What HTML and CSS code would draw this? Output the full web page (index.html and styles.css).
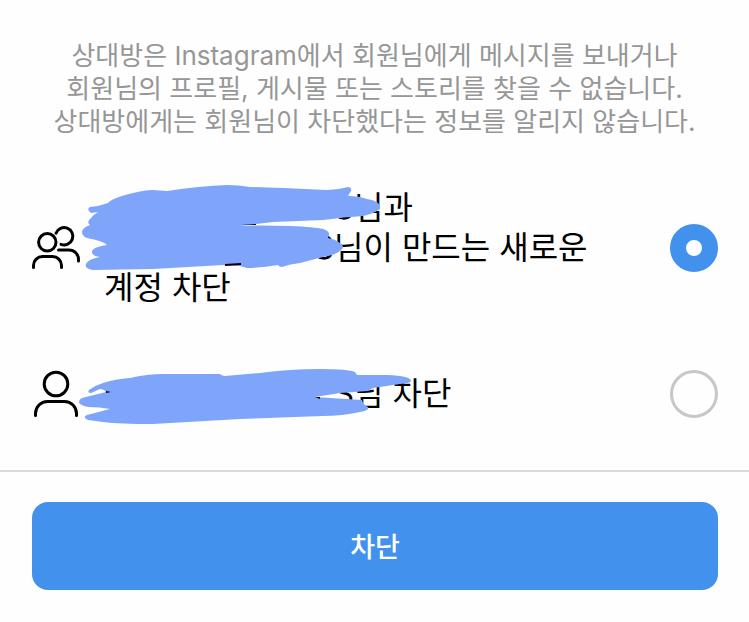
FILE: index.html
```html
<!DOCTYPE html>
<html lang="ko">
<head>
<meta charset="utf-8">
<meta name="viewport" content="width=device-width, initial-scale=1">
<title>차단</title>
<link rel="stylesheet" href="styles.css">
</head>
<body>
<form class="sheet">
  <p class="note">상대방은 Instagram에서 회원님에게 메시지를 보내거나<br>회원님의 프로필, 게시물 또는 스토리를 찾을 수 없습니다.<br>상대방에게는 회원님이 차단했다는 정보를 알리지 않습니다.</p>

  <div class="options">
    <label class="option">
      <svg class="icon" viewBox="0 0 48 48" aria-hidden="true">
        <circle cx="15.3" cy="18.3" r="8.7"/>
        <path d="M1.500 43.500v-2a9 9 0 0 1 9-9h10a9 9 0 0 1 9 9v2"/>
        <path d="M24 9.200A8.700 8.700 0 1 1 29 20.400"/>
        <path d="M26.500 26H37a9.500 9.500 0 0 1 9.500 9.500v1.500"/>
      </svg>
      <span class="text">
        <span class="line"><span class="name name-wide">S</span>님과</span>
        <span class="line"><span class="name">S</span>님이 만드는 새로운</span>
        <span class="line">계정 차단</span>
        <svg class="scribble scribble-tall" viewBox="80 180 310 96" aria-hidden="true">
          <path d="M90 207Q100 206 108 203Q112 198 133 193Q145 190 153 190L167 191Q200 186 227 185Q238 185 250 187L283 188L327 190Q338 190 348 187Q352 187 351 191L348 196Q359 196 367 199Q380 201 380 207Q380 212 363 216Q345 217 323 220L273 222L240 226Q257 225 290 226Q315 227 323 229Q330 231 329 235L328 238Q335 239 340 243Q346 247 340 251Q335 255 323 257L300 263Q290 264 282 267Q279 267 278 265Q262 268 247 268L240 266L223 265L153 269L93 270Q84 268 86 264Q88 259 100 257Q92 256 92 252Q92 247 107 245Q103 241 87 238Q82 236 82 232Q82 228 90 225Q86 222 91 218Q93 215 98 212L91 213Q86 209 90 207Z"/>
          <path class="ink" d="M241 225l15-1v1zM225 264l16-1v2l-16 1z"/>
        </svg>
      </span>
      <input class="radio" type="radio" name="scope" checked>
    </label>

    <label class="option">
      <svg class="icon" viewBox="0 0 48 48" aria-hidden="true">
        <circle cx="24" cy="14" r="11.8"/>
        <path d="M3.500 45.500v-2a12 12 0 0 1 12-12h17a12 12 0 0 1 12 12v2"/>
      </svg>
      <span class="text">
        <span class="line"><span class="name name-wide">S</span>님 차단</span>
        <svg class="scribble scribble-short" viewBox="76 364 340 64" aria-hidden="true">
          <path d="M89 390Q96 385 103 383Q115 379 130 378Q147 374 163 374H220Q222 376 225 376L260 373Q290 369 320 369Q348 369 355 372L357 375L387 375Q411 376 411 381Q411 383 400 384L373 388L368 391L340 393L315 397L362 400Q363 405 368 407Q370 410 360 412Q342 416 323 416L240 419L153 424Q120 424 103 422L88 420Q82 417 87 415L110 409Q100 407 88 407Q79 405 79 402Q79 398 86 397L106 392Q104 389 100 389L91 393Q87 393 89 390Z"/>
          <path class="ink" d="M106 391l5 1-5 1zM315 397l5 0v2z"/>
        </svg>
      </span>
      <input class="radio" type="radio" name="scope">
    </label>
  </div>

  <footer class="actions">
    <button class="submit" type="button">차단</button>
  </footer>
</form>
</body>
</html>
```
FILE: styles.css
```css
* {
  box-sizing: border-box;
}

body {
  margin: 0;
  background: #fefefe;
  color: #000;
  font-family: Inter, "Noto Sans CJK KR", sans-serif;
}

.note {
  margin: 0;
  padding: 39px 16px 0;
  color: #969696;
  font-size: 26px;
  line-height: 33px;
  text-align: center;
}

.options {
  display: flex;
  flex-direction: column;
  gap: 62px;
  padding: 50px 31px 52px 32px;
}

.option {
  display: flex;
  align-items: center;
  gap: 24px;
}

.icon {
  flex: none;
  width: 48px;
  height: 48px;
  fill: none;
  stroke: #000;
  stroke-width: 3;
  stroke-linecap: round;
}

.text {
  position: relative;
  flex: 1;
  font-size: 32px;
  line-height: 40px;
}

.line {
  display: block;
  white-space: nowrap;
}

.name {
  display: inline-block;
  width: 230px;
  text-align: right;
}

.name-wide {
  width: 250px;
}

.scribble {
  position: absolute;
  fill: #7fa5fa;
}

.scribble-tall {
  top: -8px;
  left: -24px;
  width: 310px;
  height: 96px;
}

.scribble-short {
  top: -10px;
  left: -28px;
  width: 340px;
  height: 64px;
}

.ink {
  fill: #000;
}

.radio {
  appearance: none;
  flex: none;
  width: 48px;
  height: 48px;
  margin: 0;
  border: 3px solid #c7c7c7;
  border-radius: 50%;
}

.radio:checked {
  border: 16px solid #4292ed;
  background: #fff;
}

.actions {
  padding: 30px 31px 32px 32px;
  border-top: 2px solid #dadada;
}

.submit {
  display: block;
  width: 100%;
  height: 88px;
  padding: 0 0 2px;
  border: 0;
  border-radius: 16px;
  background: #4292ed;
  color: #fff;
  font: inherit;
  font-size: 27px;
  font-weight: 500;
}
```
